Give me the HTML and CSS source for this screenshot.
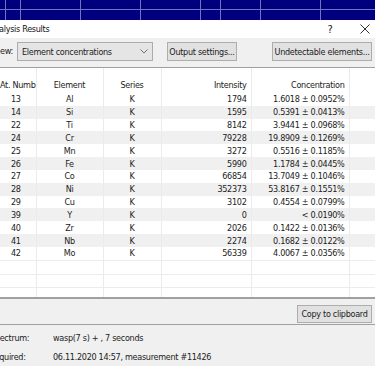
FILE: index.html
```html
<!DOCTYPE html>
<html lang="en">
<head>
    <meta charset="UTF-8">
    <meta name="viewport" content="width=device-width, initial-scale=1.0">
    <title>Analysis Results</title>
    <link rel="stylesheet" href="styles.css">
</head>
<body>

<div class="desktop"></div>

<div class="dialog">
    <div class="titlebar">
        <span class="title">Analysis Results</span>
        <span class="help">?</span>
        <span class="close">
            <svg width="10" height="10" viewBox="0 0 10 10"><path d="M0.5 0.5 L9.5 9.5 M9.5 0.5 L0.5 9.5" stroke="#333" stroke-width="1" fill="none"/></svg>
        </span>
    </div>

    <div class="toolbar">
        <span class="view-label">View:</span>
        <div class="combo">
            <span>Element concentrations</span>
            <svg class="chevron" width="8" height="5" viewBox="0 0 8 5"><polyline points="0.5,0.5 4,4 7.5,0.5" stroke="#707070" fill="none"/></svg>
        </div>
        <button class="btn btn-output">Output settings...</button>
        <button class="btn btn-undetect">Undetectable elements...</button>
    </div>

    <!-- Tabulka s vysledky -->
    <div class="grid">
        <table>
            <colgroup>
                <col class="c-num">
                <col class="c-el">
                <col class="c-series">
                <col class="c-int">
                <col class="c-conc">
                <col>
            </colgroup>
            <thead>
                <tr>
                    <th>At. Numb</th>
                    <th>Element</th>
                    <th>Series</th>
                    <th class="right">Intensity</th>
                    <th class="right">Concentration</th>
                    <th></th>
                </tr>
            </thead>
            <tbody>
                <tr><td>13</td><td>Al</td><td>K</td><td class="right">1794</td><td class="right">1.6018 ± 0.0952%</td><td></td></tr>
                <tr><td>14</td><td>Si</td><td>K</td><td class="right">1595</td><td class="right">0.5391 ± 0.0413%</td><td></td></tr>
                <tr><td>22</td><td>Ti</td><td>K</td><td class="right">8142</td><td class="right">3.9441 ± 0.0968%</td><td></td></tr>
                <tr><td>24</td><td>Cr</td><td>K</td><td class="right">79228</td><td class="right">19.8909 ± 0.1269%</td><td></td></tr>
                <tr><td>25</td><td>Mn</td><td>K</td><td class="right">3272</td><td class="right">0.5516 ± 0.1185%</td><td></td></tr>
                <tr><td>26</td><td>Fe</td><td>K</td><td class="right">5990</td><td class="right">1.1784 ± 0.0445%</td><td></td></tr>
                <tr><td>27</td><td>Co</td><td>K</td><td class="right">66854</td><td class="right">13.7049 ± 0.1046%</td><td></td></tr>
                <tr><td>28</td><td>Ni</td><td>K</td><td class="right">352373</td><td class="right">53.8167 ± 0.1551%</td><td></td></tr>
                <tr><td>29</td><td>Cu</td><td>K</td><td class="right">3102</td><td class="right">0.4554 ± 0.0799%</td><td></td></tr>
                <tr><td>39</td><td>Y</td><td>K</td><td class="right">0</td><td class="right">&lt; 0.0190%</td><td></td></tr>
                <tr><td>40</td><td>Zr</td><td>K</td><td class="right">2026</td><td class="right">0.1422 ± 0.0136%</td><td></td></tr>
                <tr><td>41</td><td>Nb</td><td>K</td><td class="right">2274</td><td class="right">0.1682 ± 0.0122%</td><td></td></tr>
                <tr><td>42</td><td>Mo</td><td>K</td><td class="right">56339</td><td class="right">4.0067 ± 0.0356%</td><td></td></tr>
                <tr class="empty"><td></td><td></td><td></td><td></td><td></td><td></td></tr>
                <tr class="empty"><td></td><td></td><td></td><td></td><td></td><td></td></tr>
                <tr class="empty"><td></td><td></td><td></td><td></td><td></td><td></td></tr>
            </tbody>
        </table>
    </div>

    <div class="actions">
        <button class="btn btn-copy">Copy to clipboard</button>
    </div>

    <div class="info">
        <div class="info-row"><span class="info-label">Spectrum:</span><span>wasp(7 s) + , 7 seconds</span></div>
        <div class="info-row"><span class="info-label">Acquired:</span><span>06.11.2020 14:57, measurement #11426</span></div>
    </div>
</div>

</body>
</html>
```

FILE: styles.css
```css
body {
    margin: 0;
    width: 375px;
    height: 366px;
    overflow: hidden;
    background-color: #f0f0f0;
    font-family: "DejaVu Sans Condensed", "DejaVu Sans", sans-serif;
    font-size: 9px;
    letter-spacing: -0.3px;
    color: #222;
}
.desktop {
    height: 20px;
    background-color: #00007f;
    background-image:
        linear-gradient(to bottom, transparent 9px, #7272c2 9px, #7272c2 10px, transparent 10px),
        linear-gradient(to right, transparent 220px, #7272c2 220px, #7272c2 221px, transparent 221px),
        repeating-linear-gradient(to right, #7272c2 0, #7272c2 1px, transparent 1px, transparent 60px);
    background-position: 0 0, 0 0, 20px 0;
}
.titlebar {
    height: 18px;
    background-color: #fff;
    display: flex;
    align-items: center;
}
.title {
    flex: 1;
    margin-left: -11px;
    color: #111;
}
.help {
    width: 14px;
    text-align: center;
    font-size: 11px;
    margin-right: 18px;
}
.close {
    width: 20px;
    display: flex;
    justify-content: center;
}
.toolbar {
    height: 29px;
    box-sizing: border-box;
    padding-top: 4px;
    display: flex;
    align-items: flex-start;
}
.view-label {
    width: 24px;
    margin-left: -7px;
    line-height: 19px;
}
.combo {
    width: 136px;
    height: 19px;
    box-sizing: border-box;
    border: 1px solid #acacac;
    background-color: #e5e5e5;
    display: flex;
    align-items: center;
    justify-content: space-between;
    padding: 0 4px 0 4px;
    white-space: nowrap;
}
.btn {
    height: 19px;
    box-sizing: border-box;
    border: 1px solid #adadad;
    background-color: #e1e1e1;
    font-family: inherit;
    font-size: 9px;
    letter-spacing: -0.3px;
    color: #222;
    padding: 0;
    white-space: nowrap;
    overflow: hidden;
}
.btn-output {
    width: 70px;
    margin-left: 14px;
}
.btn-undetect {
    width: 100px;
    margin-left: 35px;
}
.grid {
    height: 229px;
    overflow: hidden;
    background-color: #fff;
    border-top: 1px solid #a0a0a0;
    border-bottom: 2px solid #a0a0a0;
}
table {
    width: 383px;
    margin-left: -4px;
    border-collapse: collapse;
    table-layout: fixed;
}
.c-num { width: 40px; }
.c-el { width: 67px; }
.c-series { width: 58px; }
.c-int { width: 90px; }
.c-conc { width: 98px; }
th, td {
    padding: 0 4px;
    text-align: center;
    font-weight: normal;
    border-right: 1px solid #ebebeb;
    white-space: nowrap;
}
th {
    height: 25px;
    vertical-align: bottom;
    padding-bottom: 3px;
    box-sizing: border-box;
}
td {
    height: 12.83px;
    line-height: 12px;
    padding-top: 0;
    padding-bottom: 0;
}
.right {
    text-align: right;
}
tbody tr:nth-child(even) {
    background-color: #f0f0f0;
}
tbody tr.empty {
    background-color: #fff;
    border-top: 1px solid #ececec;
}
.actions {
    height: 26px;
    box-sizing: border-box;
    padding: 6px 3px 0 0;
    display: flex;
    justify-content: flex-end;
    align-items: flex-start;
    border-bottom: 1px solid #a0a0a0;
}
.btn-copy {
    width: 75px;
    height: 18px;
}
.info {
    padding-top: 4px;
}
.info-row {
    display: flex;
    line-height: 19px;
}
.info-label {
    width: 63px;
    margin-left: -10px;
}
```
